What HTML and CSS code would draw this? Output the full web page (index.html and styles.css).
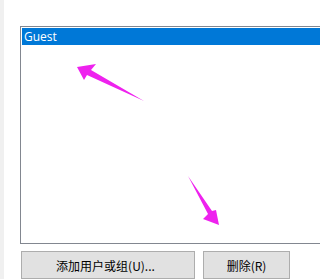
FILE: index.html
```html
<!DOCTYPE html>
<html lang="zh">
<head>
<meta charset="utf-8">
<link rel="stylesheet" href="styles.css">
</head>
<body>
<div class="window">
  <div class="edge"></div>
  <div class="content">
    <div class="listbox">
      <div class="item selected">Guest</div>
    </div>
    <div class="buttons">
      <div class="btn btn-add">添加用户或组(U)...</div>
      <div class="btn btn-remove">删除(R)</div>
    </div>
  </div>
  <svg class="arrows" width="295" height="279" viewBox="0 0 295 279">
    <polygon points="77,67 96,64 91,70 144,101 87,75 84,80" fill="#ee22ee"/>
    <polygon points="188,176 212,211 216,210 219,225 203,219 208,214" fill="#ee22ee"/>
  </svg>
</div>
</body>
</html>
```
FILE: styles.css
```css
html, body {
  margin: 0;
  padding: 0;
  background: #ffffff;
  overflow: hidden;
}
.window {
  position: relative;
  width: 100%;
  min-width: 295px;
  height: 279px;
  display: flex;
  overflow: hidden;
}
.edge {
  width: 4px;
  flex: none;
  background: #f0f0f0;
}
.content {
  flex: 1;
  padding: 26px 0 0 16px;
  display: flex;
  flex-direction: column;
}
.listbox {
  box-sizing: border-box;
  width: 600px;
  height: 219px;
  border: 1px solid #828790;
  padding: 1px;
  background: #fff;
}
.item {
  height: 17px;
  line-height: 17px;
  padding-left: 2px;
  font-family: "Open Sans", "Noto Sans", sans-serif;
  font-size: 12px;
  color: #000;
}
.item.selected {
  background: #0078d7;
  color: #fff;
}
.buttons {
  display: flex;
  gap: 8px;
  margin-top: 7px;
  margin-left: 1px;
}
.btn {
  box-sizing: border-box;
  height: 28px;
  border: 1px solid #adadad;
  background: #e1e1e1;
  display: flex;
  align-items: center;
  justify-content: center;
  font-family: "Noto Sans CJK SC", "Noto Sans", sans-serif;
  font-size: 12px;
  color: #000;
  padding-top: 1px;
}
.btn-add {
  width: 174px;
  padding-right: 5px;
}
.btn-remove {
  width: 87px;
}
.arrows {
  position: absolute;
  left: 0;
  top: 0;
}
```
